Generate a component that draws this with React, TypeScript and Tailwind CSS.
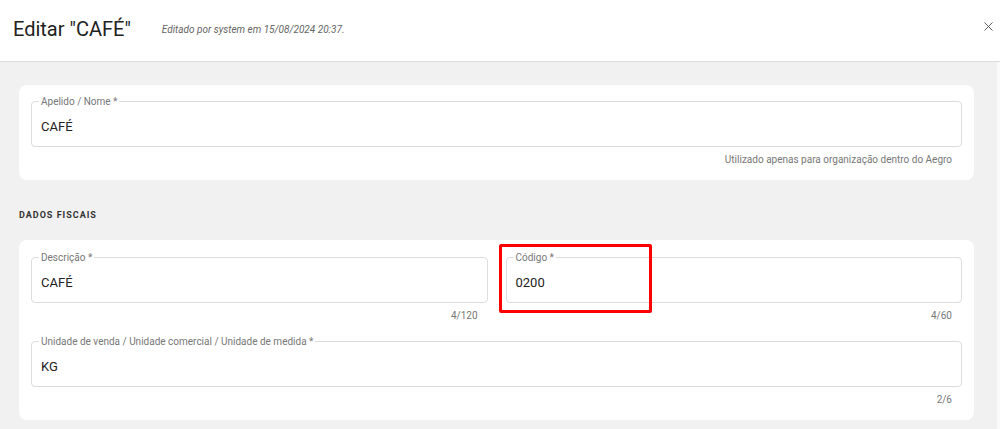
import React from 'react';
import { X } from 'lucide-react';

type FieldProps = {
  label: string;
  value: string;
  helper?: string;
  highlight?: boolean;
};

const Field: React.FC<FieldProps> = ({ label, value, helper, highlight }) => {
  return (
    <div className="flex flex-col">
      <div className="relative h-[46px] border border-[#dcdcdc] rounded-[4px] px-[9px]">
        <span className="absolute -top-[7px] left-[7px] bg-white px-[2px] text-[10px] leading-[13px] text-[#777]">{label}</span>
        <div className="pt-[15px] text-[13px] leading-[20px] text-[#222]">{value}</div>
        {highlight && (
          <div className="absolute -left-[8px] -top-[14px] w-[153px] h-[69px] border-[3px] border-[#ff0000] rounded-[2px] pointer-events-none" />
        )}
      </div>
      <div className="h-[33px] pr-[10px] pt-[6px] text-right text-[10px] leading-[13px] text-[#777]">{helper}</div>
    </div>
  );
};

const App: React.FC = () => {
  return (
    <div className="w-[1000px] h-[429px] overflow-hidden bg-white" style={{ fontFamily: 'Roboto, "Noto Sans", sans-serif' }}>
      <header className="h-[62px] border-b border-[#dedede] flex items-start pl-[13px] pr-[4px] pt-[15px]">
        <h1 className="text-[20px] leading-[28px] text-[#222]">Editar "CAFÉ"</h1>
        <span className="ml-[31px] mt-[8px] text-[10px] leading-[14px] italic text-[#666]">Editado por system em 15/08/2024 20:37.</span>
        <button className="ml-auto mt-[4px] text-[#555]">
          <X size={15} strokeWidth={1.5} />
        </button>
      </header>
      <div className="flex h-[367px]">
        <main className="flex-1 bg-[#f1f1f1] pl-[19px] pr-[23px] pt-[23px]">
          <section className="bg-white rounded-[8px] px-[12px] pt-[16px]">
            <Field label="Apelido / Nome *" value="CAFÉ" helper="Utilizado apenas para organização dentro do Aegro" />
          </section>
          <h2 className="mt-[29px] mb-[19px] text-[9px] leading-[12px] font-bold tracking-[1px] text-[#333]">DADOS FISCAIS</h2>
          <section className="bg-white rounded-[8px] px-[12px] pt-[17px]">
            <div className="grid grid-cols-2 gap-x-[18px]">
              <Field label="Descrição *" value="CAFÉ" helper="4/120" />
              <Field label="Código *" value="0200" helper="4/60" highlight />
            </div>
            <div className="pt-[5px]">
              <Field label="Unidade de venda / Unidade comercial / Unidade de medida *" value="KG" helper="2/6" />
            </div>
          </section>
        </main>
        <div className="w-[3px] bg-[#fafafa]" />
      </div>
    </div>
  );
};

export default App;
